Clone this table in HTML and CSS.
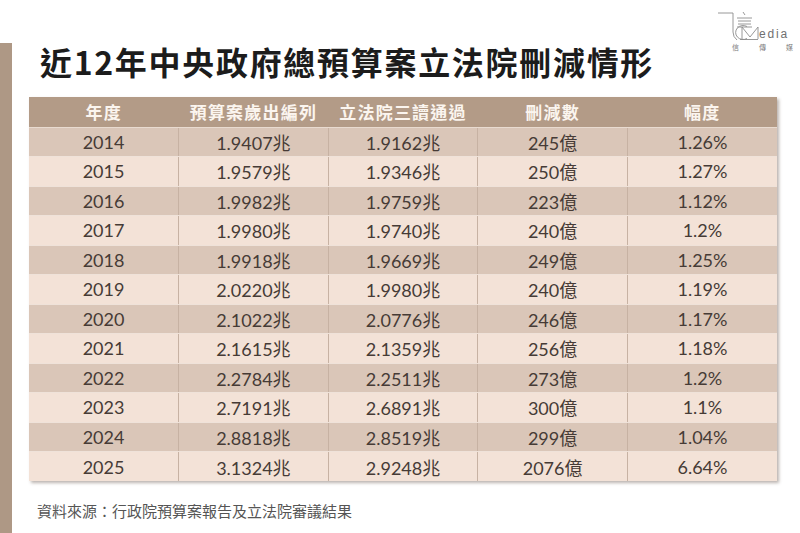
FILE: index.html
```html
<!DOCTYPE html>
<html lang="zh-Hant">
<head>
<meta charset="utf-8">
<title>近12年中央政府總預算案立法院刪減情形</title>
<link rel="stylesheet" href="styles.css">
</head>
<body>
<div class="page">
  <div class="bar"></div>
  <main class="content">
    <h1 class="title">近12年中央政府總預算案立法院刪減情形</h1>
    <table class="data">
      <thead>
        <tr><th>年度</th><th>預算案歲出編列</th><th>立法院三讀通過</th><th>刪減數</th><th>幅度</th></tr>
      </thead>
      <tbody>
        <tr><td>2014</td><td>1.9407兆</td><td>1.9162兆</td><td>245億</td><td>1.26%</td></tr>
        <tr><td>2015</td><td>1.9579兆</td><td>1.9346兆</td><td>250億</td><td>1.27%</td></tr>
        <tr><td>2016</td><td>1.9982兆</td><td>1.9759兆</td><td>223億</td><td>1.12%</td></tr>
        <tr><td>2017</td><td>1.9980兆</td><td>1.9740兆</td><td>240億</td><td>1.2%</td></tr>
        <tr><td>2018</td><td>1.9918兆</td><td>1.9669兆</td><td>249億</td><td>1.25%</td></tr>
        <tr><td>2019</td><td>2.0220兆</td><td>1.9980兆</td><td>240億</td><td>1.19%</td></tr>
        <tr><td>2020</td><td>2.1022兆</td><td>2.0776兆</td><td>246億</td><td>1.17%</td></tr>
        <tr><td>2021</td><td>2.1615兆</td><td>2.1359兆</td><td>256億</td><td>1.18%</td></tr>
        <tr><td>2022</td><td>2.2784兆</td><td>2.2511兆</td><td>273億</td><td>1.2%</td></tr>
        <tr><td>2023</td><td>2.7191兆</td><td>2.6891兆</td><td>300億</td><td>1.1%</td></tr>
        <tr><td>2024</td><td>2.8818兆</td><td>2.8519兆</td><td>299億</td><td>1.04%</td></tr>
        <tr><td>2025</td><td>3.1324兆</td><td>2.9248兆</td><td>2076億</td><td>6.64%</td></tr>
      </tbody>
    </table>
    <p class="source">資料來源：行政院預算案報告及立法院審議結果</p>
  </main>
  <div class="logo">
    <svg class="logo-mark" width="84" height="36" viewBox="0 0 84 36" fill="none" stroke="#8c8c8c" stroke-width="0.9">
      <path d="M4 7 H19"/>
      <path d="M19 7 V26 Q19 31 23 34"/>
      <path d="M29 6 L31 9"/>
      <path d="M23 12 H38"/>
      <path d="M24 15 H37"/>
      <path d="M24 18 H37"/>
      <path d="M23 21 H38"/>
      <path d="M33 20.5 A7.5 7 0 1 0 33 32.5"/>
      <path d="M28 33 V21 L36 31 L44 21 V33"/>
      <path d="M26 33.5 H44"/>
      <text x="45" y="32" font-family="Liberation Sans, sans-serif" font-size="12" fill="#707070" stroke="none" letter-spacing="1.8">edia</text>
    </svg>
    <div class="logo-sub"><span>信</span><span>傳</span><span>媒</span></div>
  </div>
</div>
</body>
</html>
```

FILE: styles.css
```css
* { box-sizing: border-box; }
html, body {
  margin: 0;
  padding: 0;
  background: #ffffff;
}
body {
  width: 800px;
  height: 533px;
  overflow: hidden;
  font-family: "Noto Sans CJK TC", sans-serif;
}
.page {
  position: relative;
  display: flex;
  height: 533px;
}
.bar {
  flex: 0 0 12px;
  margin-top: 43px;
  background: #ae9885;
}
.content {
  flex: 1;
  padding-left: 17px;
  display: flex;
  flex-direction: column;
}
.title {
  margin: 41px 0 16px 11px;
  font-family: "Noto Sans CJK TC", sans-serif;
  font-weight: 700;
  font-size: 32px;
  line-height: 40px;
  letter-spacing: 1.7px;
  color: #1c1c1c;
}
.data {
  width: 748px;
  border-collapse: collapse;
  table-layout: fixed;
  box-shadow: 2px 2px 3px rgba(60, 40, 30, 0.35);
}
.data th {
  height: 30px;
  padding: 0;
  background: #b39b87;
  color: #fbf5ef;
  font-family: "Noto Sans CJK TC", sans-serif;
  font-weight: 700;
  font-size: 17px;
  letter-spacing: 1.2px;
  text-align: center;
  border-bottom: 1px solid #e9dbd0;
}
.data td {
  height: 29.5px;
  padding: 0;
  text-align: center;
  font-family: Lato, "Noto Sans CJK TC", sans-serif;
  font-size: 18px;
  color: #463b36;
  border-left: 1px solid #c7b2a3;
  border-bottom: 1px solid #efe2d9;
}
.data td:first-child { border-left: none; }
.data tbody tr:nth-child(odd) td { background: #dac6b8; }
.data tbody tr:nth-child(even) td { background: #f3e2d7; }
.data tbody tr:last-child td { border-bottom: none; }
.source {
  margin: 20px 0 0 8px;
  font-family: "Noto Sans CJK TC", sans-serif;
  font-size: 15px;
  line-height: 20px;
  color: #555555;
}
.logo {
  position: absolute;
  left: 714px;
  top: 6px;
  width: 84px;
}
.logo-mark { display: block; }
.logo-sub {
  display: flex;
  justify-content: space-between;
  padding: 0 5px 0 18px;
  margin-top: 1px;
  font-family: "Noto Sans CJK TC", serif;
  font-size: 7px;
  line-height: 8px;
  color: #7a7a7a;
}
```
